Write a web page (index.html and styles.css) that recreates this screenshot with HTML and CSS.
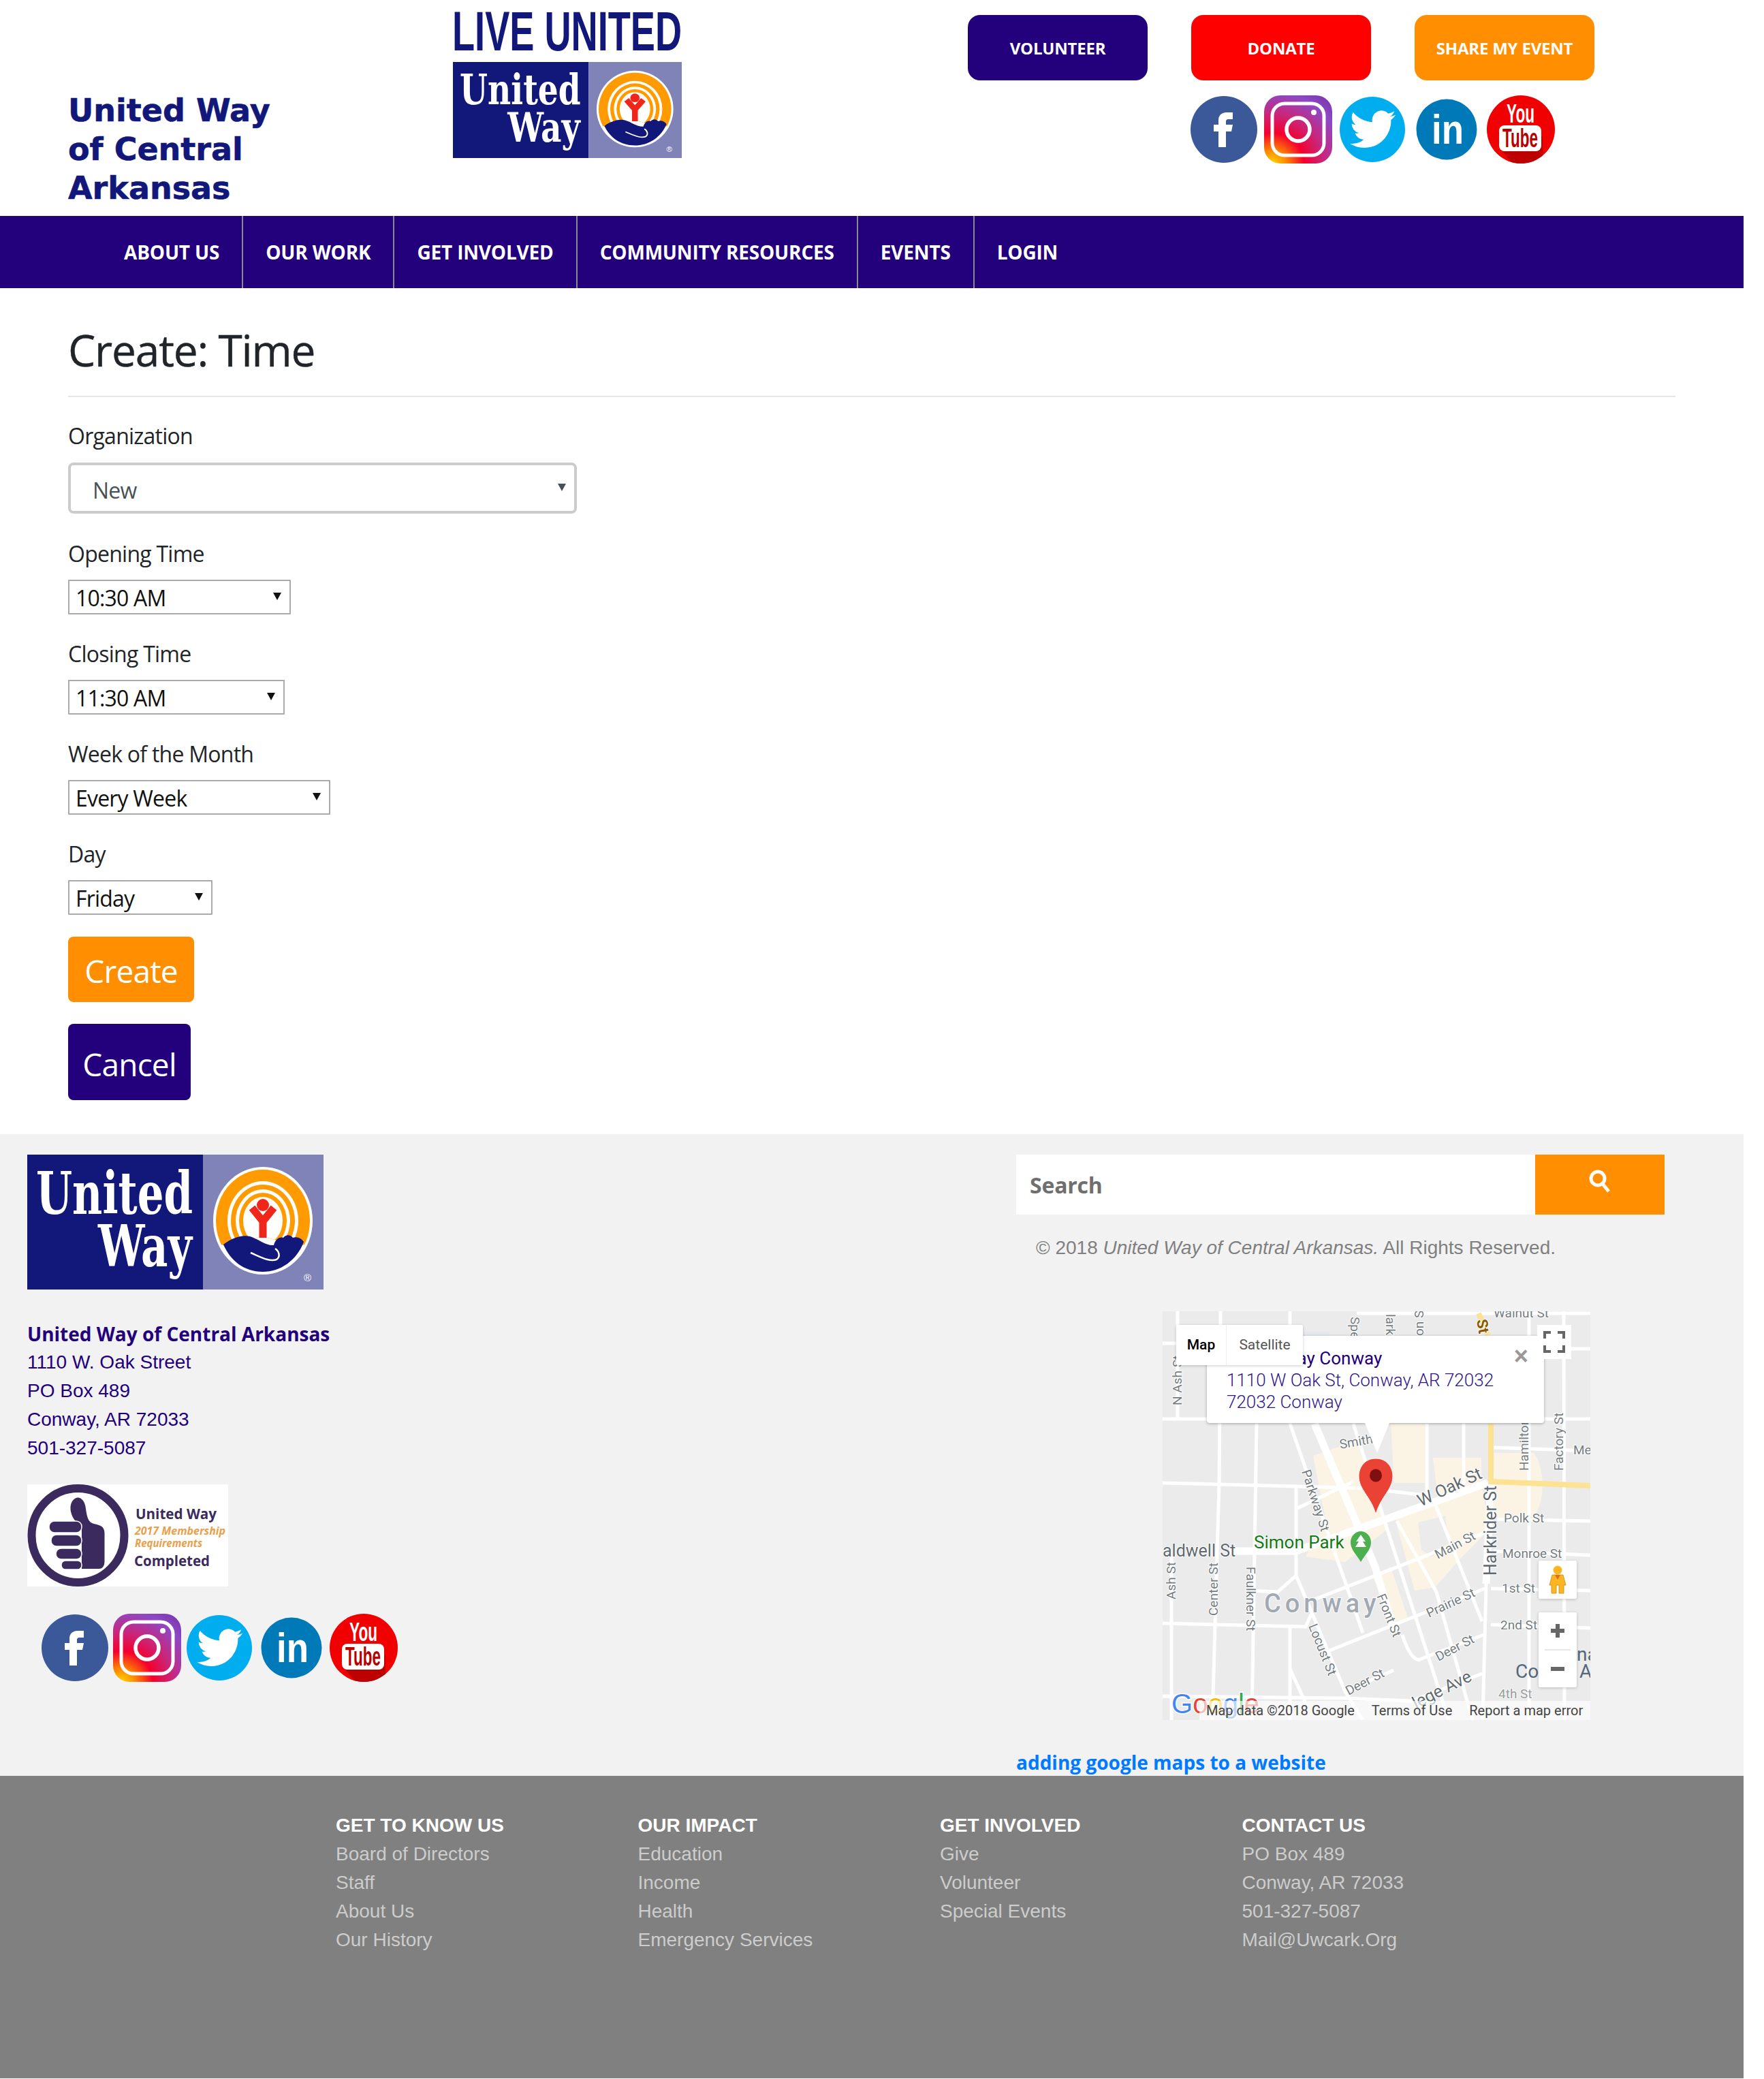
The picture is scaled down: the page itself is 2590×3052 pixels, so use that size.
FILE: index.html
```html
<!DOCTYPE html>
<html lang="en">
<head>
  <meta charset="UTF-8" />
  <meta name="viewport" content="width=device-width, initial-scale=1.0"/>
  <title>Create: Time - United Way of Central Arkansas</title>
  <link rel="stylesheet" href="styles.css">
</head>
<body>
  <!-- shared artwork -->
  <svg class="defs" width="0" height="0">
    <defs>
      <radialGradient id="igGrad" cx="0.12" cy="1.02" r="1.3">
        <stop offset="0" stop-color="#ffdd00"/>
        <stop offset="0.16" stop-color="#ff8a00"/>
        <stop offset="0.36" stop-color="#f5002c"/>
        <stop offset="0.58" stop-color="#c9267c"/>
        <stop offset="0.82" stop-color="#8c49c6"/>
        <stop offset="1" stop-color="#7a35a8"/>
      </radialGradient>
      <clipPath id="archClip"><path d="M270 0H420V130L396 134L346 120L296 134L270 130Z"/></clipPath>
      <clipPath id="ytClip"><circle cx="50" cy="50" r="50"/></clipPath>

      <symbol id="uwLogo" viewBox="0 0 435 198" preserveAspectRatio="none">
        <rect width="258" height="198" fill="#12177a"/>
        <rect x="258" width="177" height="198" fill="#7f83b8"/>
        <text class="logo-word" x="13" y="87" font-size="86" textLength="230" lengthAdjust="spacingAndGlyphs">United</text>
        <text class="logo-word" x="104" y="164" font-size="84" textLength="138" lengthAdjust="spacingAndGlyphs">Way</text>
        <ellipse cx="346" cy="97" rx="73" ry="79" fill="#fff"/>
        <g clip-path="url(#archClip)">
          <ellipse cx="346" cy="97" rx="69" ry="75" fill="#ff9b00"/>
          <ellipse cx="346" cy="97" rx="52" ry="58" fill="#fff"/>
          <ellipse cx="346" cy="97" rx="47" ry="53" fill="#ff9b00"/>
          <ellipse cx="346" cy="97" rx="40" ry="46" fill="#fff"/>
          <ellipse cx="346" cy="97" rx="35" ry="41" fill="#ff9b00"/>
          <ellipse cx="346" cy="97" rx="29" ry="35" fill="#fff"/>
        </g>
        <circle cx="346" cy="74" r="9" fill="#f0261b"/>
        <path d="M330 78L346 98L362 78M346 96V122" fill="none" stroke="#f0261b" stroke-width="11"/>
        <path d="M288 132C300 122 316 117 327 120C340 124 350 134 362 133C364 125 370 120 376 122C380 117 386 117 390 122C396 120 402 122 406 128C396 155 372 172 346 172C318 172 298 155 288 132Z" fill="#12177a"/>
        <path d="M328 144C342 150 356 158 366 154C372 150 370 142 364 138" fill="none" stroke="#fff" stroke-width="2.5"/>
        <text x="406" y="186" font-size="15" fill="#fff" font-family="'Liberation Sans', sans-serif">®</text>
      </symbol>

      <symbol id="icFb" viewBox="0 0 100 100">
        <circle cx="50" cy="50" r="49" fill="#3b5998"/>
        <path d="M42 76V53H35V43H42V36C42 30 46 25 54 25H63V35H57C54 35 53 36 53 39V43H63L61 53H53V76Z" fill="#fff"/>
      </symbol>
      <symbol id="icIg" viewBox="0 0 100 100">
        <rect width="100" height="100" rx="24" fill="url(#igGrad)"/>
        <rect x="12" y="12" width="76" height="76" rx="18" fill="none" stroke="#fff" stroke-width="5"/>
        <circle cx="50" cy="50" r="17" fill="none" stroke="#fff" stroke-width="5.5"/>
        <circle cx="73" cy="25" r="4" fill="#fff"/>
      </symbol>
      <symbol id="icTw" viewBox="0 0 100 100">
        <circle cx="50" cy="50" r="48" fill="#00adef"/>
        <path transform="translate(17 16) scale(2.8)" fill="#fff" d="M23.953 4.57a10 10 0 01-2.825.775 4.958 4.958 0 002.163-2.723c-.951.555-2.005.959-3.127 1.184a4.92 4.92 0 00-8.384 4.482C7.69 8.095 4.067 6.13 1.64 3.162a4.822 4.822 0 00-.666 2.475c0 1.71.87 3.213 2.188 4.096a4.904 4.904 0 01-2.228-.616v.06a4.923 4.923 0 003.946 4.827 4.996 4.996 0 01-2.212.085 4.936 4.936 0 004.604 3.417 9.867 9.867 0 01-6.102 2.105c-.39 0-.779-.023-1.17-.067a13.995 13.995 0 007.557 2.209c9.053 0 13.998-7.496 13.998-13.985 0-.21 0-.42-.015-.63A9.935 9.935 0 0024 4.59z"/>
      </symbol>
      <symbol id="icIn" viewBox="0 0 100 100">
        <circle cx="50" cy="50" r="44.5" fill="#0079b9"/>
        <text class="ic-word" x="28" y="71" font-size="62" textLength="47" lengthAdjust="spacingAndGlyphs" fill="#fff">in</text>
      </symbol>
      <symbol id="icYt" viewBox="0 0 100 100">
        <circle cx="50" cy="50" r="50" fill="#f00000"/>
        <path clip-path="url(#ytClip)" d="M18 76L38 100H82V60Z" fill="#bd0000"/>
        <text class="ic-word" x="29" y="40" font-size="38" textLength="41" lengthAdjust="spacingAndGlyphs" fill="#fff">You</text>
        <rect x="18" y="44" width="62" height="38" rx="8" fill="#fff"/>
        <text class="ic-word" x="23" y="76" font-size="39" textLength="52" lengthAdjust="spacingAndGlyphs" fill="#b70000">Tube</text>
      </symbol>
    </defs>
  </svg>

  <div class="site">
    <header class="top">
      <h2 class="brand">United Way<br>of Central<br>Arkansas</h2>
      <div class="live">
        <svg class="live-word" viewBox="0 0 336 91" width="336" height="91">
          <text x="-1" y="74" font-size="81" textLength="337" lengthAdjust="spacingAndGlyphs">LIVE UNITED</text>
        </svg>
        <svg class="logo-top"><use href="#uwLogo" width="336" height="141"/></svg>
      </div>
      <div class="actions">
        <div class="action-row">
          <a class="action action-navy" href="#">VOLUNTEER</a>
          <a class="action action-red" href="#">DONATE</a>
          <a class="action action-orange" href="#">SHARE MY EVENT</a>
        </div>
        <div class="social social-top">
          <svg class="ic"><use href="#icFb"/></svg>
          <svg class="ic"><use href="#icIg"/></svg>
          <svg class="ic"><use href="#icTw"/></svg>
          <svg class="ic"><use href="#icIn"/></svg>
          <svg class="ic"><use href="#icYt"/></svg>
        </div>
      </div>
    </header>

    <nav class="mainnav">
      <a href="#">ABOUT US</a>
      <a href="#">OUR WORK</a>
      <a href="#">GET INVOLVED</a>
      <a href="#">COMMUNITY RESOURCES</a>
      <a href="#">EVENTS</a>
      <a href="#">LOGIN</a>
    </nav>

    <main class="content">
      <h1 class="page-title">Create: Time</h1>
      <form class="time-form">
        <label class="lbl lbl-org">Organization</label>
        <div class="pick pick-org">
          <select class="sel sel-org"><option>New</option></select>
        </div>
        <label class="lbl">Opening Time</label>
        <div class="pick">
          <select class="sel sel-open"><option>10:30 AM</option></select>
        </div>
        <label class="lbl">Closing Time</label>
        <div class="pick">
          <select class="sel sel-close"><option>11:30 AM</option></select>
        </div>
        <label class="lbl">Week of the Month</label>
        <div class="pick">
          <select class="sel sel-week"><option>Every Week</option></select>
        </div>
        <label class="lbl">Day</label>
        <div class="pick">
          <select class="sel sel-day"><option>Friday</option></select>
        </div>
        <button class="btn btn-create" type="button">Create</button>
        <a class="btn btn-cancel" href="#">Cancel</a>
      </form>
    </main>

    <section class="mid">
      <div class="mid-left">
        <svg class="logo-foot"><use href="#uwLogo" width="435" height="198"/></svg>
        <address class="addr">
          <strong>United Way of Central Arkansas</strong>
          <span>1110 W. Oak Street</span>
          <span>PO Box 489</span>
          <span>Conway, AR 72033</span>
          <span>501-327-5087</span>
        </address>
        <svg class="badge" viewBox="0 0 295 150">
          <rect width="295" height="150" fill="#fff"/>
          <ellipse cx="74.500" cy="75" rx="68" ry="69" fill="none" stroke="#3b2a5e" stroke-width="12"/>
          <path d="M80 124H105C112 124 113.500 118 113.500 112V72C113.500 62 108 60 98 58C90 56 88 50 86 36C85 24 78 18 72 20C66 22 62 30 64 40C66 50 72 56 76 58L80 62Z" fill="#3b2a5e"/>
          <g fill="#3b2a5e" stroke="#fff" stroke-width="1.500">
            <rect x="32" y="54" width="48" height="17" rx="8"/>
            <rect x="35" y="74" width="45" height="17" rx="8"/>
            <rect x="42" y="94" width="38" height="16" rx="8"/>
            <rect x="50" y="112" width="30" height="13" rx="6"/>
          </g>
          <text class="badge-strong" x="159" y="51" font-size="21" textLength="119" lengthAdjust="spacingAndGlyphs">United Way</text>
          <text class="badge-note" x="158" y="74" font-size="16" textLength="133" lengthAdjust="spacingAndGlyphs">2017 Membership</text>
          <text class="badge-note" x="158" y="92" font-size="16" textLength="99" lengthAdjust="spacingAndGlyphs">Requirements</text>
          <text class="badge-strong" x="157" y="120" font-size="21" textLength="111" lengthAdjust="spacingAndGlyphs">Completed</text>
        </svg>
        <div class="social social-foot">
          <svg class="ic"><use href="#icFb"/></svg>
          <svg class="ic"><use href="#icIg"/></svg>
          <svg class="ic"><use href="#icTw"/></svg>
          <svg class="ic"><use href="#icIn"/></svg>
          <svg class="ic"><use href="#icYt"/></svg>
        </div>
      </div>

      <div class="mid-right">
        <form class="search">
          <input class="search-input" type="text" placeholder="Search">
          <button class="search-btn" type="button" aria-label="Search">
            <svg width="32" height="34" viewBox="0 0 32 34"><circle cx="13" cy="13" r="10" fill="none" stroke="#fff" stroke-width="5"/><path d="M20 21L29 32" stroke="#fff" stroke-width="5"/></svg>
          </button>
        </form>
        <p class="copy">© 2018 <em>United Way of Central Arkansas.</em> All Rights Reserved.</p>

        <div class="map">
          <svg class="map-art" viewBox="0 0 628 600" width="628" height="600">
            <rect width="628" height="600" fill="#ebebeb"/>
            <path d="M195 30H245V60H195Z" fill="#e4e8ec"/>
            <g fill="#fbf4e4">
              <path d="M221 212L285 190L330 320L268 368L210 360L240 310Z"/>
              <path d="M335 165H385V252H340Z"/>
              <path d="M397 215L468 215V262L405 280Z"/>
              <path d="M486 208H545C562 230 562 280 545 302H486Z"/>
              <path d="M340 300L400 280L470 262L480 320L440 360L400 405L370 410Z"/>
              <path d="M308 388L335 375L360 450L340 468Z"/>
            </g>
            <path d="M375 310L415 300L420 340L395 360L380 350Z" fill="#ebebeb"/>

            <g class="roads">
              <path d="M85 0L83 252L73 600"/>
              <path d="M138 165L131 600"/>
              <path d="M196 257V388"/>
              <path d="M13 360V600"/>
              <path d="M22 0V158"/>
              <path d="M187 0V165"/>
              <path d="M388 165V285"/>
              <path d="M442 165V262"/>
              <path d="M538 0V600"/>
              <path d="M589 0L590 600"/>
              <path d="M187 165L294 472"/>
              <path d="M280 165L420 600"/>
              <path d="M0 252L196 257L300 260L385 270"/>
              <path d="M0 158H628"/>
              <path d="M0 47H60"/>
              <path d="M285 3H628"/>
              <path d="M560 55H628"/>
              <path d="M486 200L628 205"/>
              <path d="M491 305L628 308"/>
              <path d="M486 352L628 358"/>
              <path d="M482 407L628 410"/>
              <path d="M482 460L628 465"/>
              <path d="M0 458L210 463L218 445"/>
              <path d="M129 410L169 412L196 388L268 558L294 600"/>
              <path d="M187 465V600"/>
              <path d="M187 525L210 575"/>
              <path d="M218 425L473 325"/>
              <path d="M245 498L473 407"/>
              <path d="M375 512L471 475"/>
              <path d="M268 558L339 527"/>
              <path d="M0 565L268 568L366 572L469 532"/>
              <path d="M344 308L402 412L455 600"/>
              <path d="M397 275L469 455"/>
              <path d="M352 475C360 500 368 512 378 512"/>
              <path d="M196 290L280 250"/>
              <path d="M475 400L470 600" />
            </g>
            <g class="roads roads-wide">
              <path d="M223 165L312 375L340 470"/>
              <path d="M98 352H196L477 252"/>
              <path d="M482 250L475 400"/>
            </g>
            <path d="M482 165V250L628 256" class="hwy"/>
            <path d="M464 3L478 35" class="hwy"/>

            <g class="ml">
              <text x="486" y="9">Walnut St</text>
              <text transform="translate(276 8) rotate(90)">Spe</text>
              <text transform="translate(328 4) rotate(90)">lark</text>
              <text transform="translate(383 36) rotate(-90)">on S</text>
              <text class="ml-st" transform="translate(461 13) rotate(80)">St</text>
              <text transform="translate(28 138) rotate(-90)">N Ash St</text>
              <text transform="translate(261 202) rotate(-10)">Smith</text>
              <text transform="translate(204 235) rotate(72)">Parkway St</text>
              <text x="501" y="310">Polk St</text>
              <text x="499" y="362">Monroe St</text>
              <text transform="translate(404 364) rotate(-28)">Main St</text>
              <text transform="translate(19 423) rotate(-90)">Ash St</text>
              <text transform="translate(81 447) rotate(-90)">Center St</text>
              <text transform="translate(123 375) rotate(90)">Faulkner St</text>
              <text transform="translate(314 418) rotate(68)">Front St</text>
              <text transform="translate(214 462) rotate(68)">Locust St</text>
              <text transform="translate(391 450) rotate(-25)">Prairie St</text>
              <text x="498" y="413">1st St</text>
              <text x="496" y="467">2nd St</text>
              <text transform="translate(405 514) rotate(-28)">Deer St</text>
              <text transform="translate(273 564) rotate(-28)">Deer St</text>
              <text transform="translate(588 234) rotate(-90)">Factory St</text>
              <text transform="translate(537 234) rotate(-90)">Hamilton St</text>
              <text x="603" y="210">Me</text>
              <text x="493" y="568" opacity="0.7">4th St</text>
            </g>
            <g class="ml ml-big">
              <text transform="translate(379 287) rotate(-25)">W Oak St</text>
              <text transform="translate(490 388) rotate(-90)">Harkrider St</text>
              <text x="0" y="360">aldwell St</text>
              <text transform="translate(372 584) rotate(-27)">lege Ave</text>
            </g>
            <text class="ml-town" x="149" y="442">Conway</text>
            <text class="ml-park" x="134" y="348">Simon Park</text>
            <path d="M291 368C284 356 276 350 276 339C276 330 283 323 291 323C299 323 306 330 306 339C306 350 298 356 291 368Z" fill="#4caf50"/>
            <path d="M291 328L284 338H288L283 346H299L294 338H298Z" fill="#fff"/>
            <text class="ml-co" x="518" y="538">Co</text>
            <text class="ml-co" x="608" y="513">na</text>
            <text class="ml-co" x="612" y="538">A</text>

            <path d="M313 216C296 216 288 230 288 242C288 262 306 272 313 298C320 272 338 262 338 242C338 230 330 216 313 216Z" fill="#ea4335" stroke="#fff" stroke-width="1"/>
            <ellipse cx="313" cy="241" rx="9" ry="9.500" fill="#7f1010"/>
            <text class="gl" x="13" y="590"><tspan fill="#4285f4">G</tspan><tspan fill="#ea4335">o</tspan><tspan fill="#fbbc05">o</tspan><tspan fill="#4285f4">g</tspan><tspan fill="#34a853">l</tspan><tspan fill="#ea4335">e</tspan></text>
          </svg>

          <div class="info">
            <b class="info-title">United Way Conway</b>
            <span>1110 W Oak St, Conway, AR 72032</span>
            <span>72032 Conway</span>
            <i class="info-close">×</i>
          </div>
          <i class="info-tail"></i>
          <div class="map-types"><b>Map</b><span>Satellite</span></div>
          <div class="map-full">
            <svg width="32" height="32" viewBox="0 0 32 32"><path d="M2 11V2H11M21 2H30V11M30 21V30H21M11 30H2V21" fill="none" stroke="#666" stroke-width="4"/></svg>
          </div>
          <div class="map-peg">
            <svg width="26" height="42" viewBox="0 0 26 42"><circle cx="13" cy="7" r="6.500" fill="#fdb622"/><path d="M5 14H21L25 29H22V41H15V29H11V41H4V29H1Z" fill="#fdb622" stroke="#c88a10" stroke-width="0.800"/><path d="M9 14L13 21L17 14Z" fill="#d9701a"/></svg>
          </div>
          <div class="map-zoom">
            <span class="zm zm-plus"></span>
            <span class="zm-sep"></span>
            <span class="zm zm-minus"></span>
          </div>
          <div class="map-attr">
            <span>Map data ©2018 Google</span>
            <span>Terms of Use</span>
            <span>Report a map error</span>
          </div>
        </div>

        <a class="map-link" href="#">adding google maps to a website</a>
      </div>
    </section>

    <footer class="links">
      <ul>
        <li class="head">GET TO KNOW US</li>
        <li>Board of Directors</li>
        <li>Staff</li>
        <li>About Us</li>
        <li>Our History</li>
      </ul>
      <ul>
        <li class="head">OUR IMPACT</li>
        <li>Education</li>
        <li>Income</li>
        <li>Health</li>
        <li>Emergency Services</li>
      </ul>
      <ul>
        <li class="head">GET INVOLVED</li>
        <li>Give</li>
        <li>Volunteer</li>
        <li>Special Events</li>
      </ul>
      <ul>
        <li class="head">CONTACT US</li>
        <li>PO Box 489</li>
        <li>Conway, AR 72033</li>
        <li>501-327-5087</li>
        <li>Mail@Uwcark.Org</li>
      </ul>
    </footer>
  </div>
</body>
</html>
```

FILE: styles.css
```css
* {
  box-sizing: border-box;
}
body {
  margin: 0;
  background: #fff;
  font-family: "Open Sans", sans-serif;
  color: #212529;
}
a {
  text-decoration: none;
}
.defs {
  position: absolute;
}
.site {
  width: 2560px;
}

/* top */
.top {
  display: flex;
  height: 317px;
  padding-left: 100px;
}
.brand {
  width: 565px;
  align-self: flex-end;
  margin: 0 0 12px;
  font-family: "DejaVu Sans", sans-serif;
  font-size: 46px;
  font-weight: bold;
  line-height: 57px;
  color: #12177a;
  -webkit-text-stroke: 0.6px #12177a;
}
.live {
  width: 336px;
}
.live-word {
  display: block;
}
.live-word text {
  font-family: "Liberation Sans", sans-serif;
  font-weight: bold;
  fill: #12177a;
}
.logo-top {
  display: block;
  width: 336px;
  height: 141px;
}
.logo-word {
  font-family: "DejaVu Serif", serif;
  font-weight: bold;
  fill: #fff;
}
.ic-word {
  font-family: "Liberation Sans", sans-serif;
  font-weight: bold;
}
.actions {
  margin-left: 420px;
  padding-top: 22px;
}
.action-row {
  display: flex;
  gap: 64px;
}
.action {
  display: flex;
  align-items: center;
  justify-content: center;
  width: 264px;
  height: 96px;
  border-radius: 18px;
  color: #fff;
  font-size: 24px;
  font-weight: 700;
  letter-spacing: -0.2px;
}
.action-navy {
  background: #23007c;
}
.action-red {
  background: #ff0000;
}
.action-orange {
  background: #ff8f00;
}
.social {
  display: flex;
}
.ic {
  display: block;
  width: 100px;
  height: 100px;
}
.social-top {
  margin: 22px 0 0 326px;
  gap: 9px;
}
.social-foot {
  margin: 40px 0 0 20px;
  gap: 6px;
}

/* nav */
.mainnav {
  display: flex;
  height: 106px;
  padding-left: 149px;
  background: #23007c;
}
.mainnav a {
  display: flex;
  align-items: center;
  padding: 0 33px;
  border-right: 2px solid #8a8a8a;
  color: #fff;
  font-size: 28px;
  font-weight: 700;
  letter-spacing: -0.18px;
}
.mainnav a:last-child {
  border-right: none;
}

/* form */
.content {
  height: 1242px;
  margin: 0 100px;
}
.page-title {
  margin: 0;
  padding-top: 47px;
  height: 160px;
  border-bottom: 2px solid #e6e6e6;
  font-size: 64px;
  font-weight: 400;
  line-height: 88px;
  letter-spacing: -1.2px;
  -webkit-text-stroke: 0.4px #212529;
}
.time-form {
  display: block;
}
.lbl {
  display: block;
  height: 44px;
  margin-top: 36px;
  font-size: 32px;
  line-height: 44px;
  letter-spacing: -0.75px;
}
.lbl-org {
  margin-top: 35px;
}
.pick {
  position: relative;
  width: max-content;
  margin-top: 16px;
}
.pick::after {
  content: "";
  position: absolute;
  top: 19px;
  right: 14px;
  border-left: 6px solid transparent;
  border-right: 6px solid transparent;
  border-top: 11px solid #111;
  pointer-events: none;
}
.pick-org {
  margin: 17px 0 37px;
}
.pick-org + .lbl {
  margin-top: 0;
}
.pick-org::after {
  top: 31px;
  right: 16px;
  border-top-color: #495057;
}
.sel {
  display: block;
  appearance: none;
  height: 51px;
  padding: 2px 0 0 9px;
  border: 2px solid #aaa;
  border-radius: 1px;
  background: #fff;
  color: #111;
  font-family: "Open Sans", sans-serif;
  font-size: 32px;
  letter-spacing: -0.8px;
}
.sel-org {
  width: 747px;
  height: 75px;
  padding: 5px 0 0 32px;
  border: 4px solid #ccc;
  border-radius: 8px;
  color: #495057;
}
.sel-open {
  width: 327px;
}
.sel-close {
  width: 318px;
}
.sel-week {
  width: 385px;
}
.sel-day {
  width: 212px;
}
.btn {
  display: block;
  border: none;
  border-radius: 8px;
  color: #fff;
  font-family: "Open Sans", sans-serif;
  font-size: 46px;
  letter-spacing: -0.8px;
  text-align: center;
}
.btn-create {
  width: 185px;
  height: 96px;
  margin-top: 32px;
  padding: 4px 0 0;
  background: #ff8f00;
}
.btn-cancel {
  width: 180px;
  height: 112px;
  margin-top: 32px;
  line-height: 118px;
  background: #23007c;
}

/* middle footer */
.mid {
  display: flex;
  height: 942px;
  padding: 30px 0 0 40px;
  background: #f2f2f2;
}
.mid-left {
  width: 1452px;
}
.logo-foot {
  display: block;
  width: 435px;
  height: 198px;
}
.addr {
  display: flex;
  flex-direction: column;
  margin: 45px 0 32px;
  color: #23007c;
  font-family: "Liberation Sans", sans-serif;
  font-size: 28px;
  font-style: normal;
  line-height: 42px;
}
.addr strong {
  font-family: "Open Sans", sans-serif;
  font-weight: 700;
  font-size: 28px;
  line-height: 41px;
}
.badge {
  display: block;
  width: 295px;
  height: 150px;
}
.badge-strong {
  font-family: "Open Sans", sans-serif;
  font-weight: 700;
  fill: #3b2a5e;
}
.badge-note {
  font-family: "Open Sans", sans-serif;
  font-weight: 700;
  font-style: italic;
  fill: #e8a04a;
}
.mid-right {
  width: 952px;
}
.search {
  display: flex;
  width: 952px;
  height: 88px;
}
.search-input {
  width: 762px;
  padding: 0 20px;
  border: none;
  background: #fff;
  font-family: "Open Sans", sans-serif;
  font-size: 32px;
  font-weight: 700;
  letter-spacing: -0.2px;
}
.search-input::placeholder {
  color: #6f6f6f;
  opacity: 1;
}
.search-btn {
  display: flex;
  justify-content: center;
  width: 190px;
  padding: 22px 0 0;
  border: none;
  background: #ff8f00;
}
.copy {
  margin: 28px 0 0 29px;
  color: #808080;
  font-family: "Liberation Sans", sans-serif;
  font-size: 28px;
  line-height: 42px;
}
.map {
  position: relative;
  width: 628px;
  height: 600px;
  margin: 72px 0 0 215px;
  overflow: hidden;
}
.map-art {
  display: block;
}
.roads path {
  fill: none;
  stroke: #fff;
  stroke-width: 5;
}
.roads-wide path {
  stroke-width: 11;
}
.hwy {
  fill: none;
  stroke: #fde293;
  stroke-width: 8;
}
.ml text {
  font-family: Roboto, sans-serif;
  font-size: 19px;
  fill: #757c80;
  stroke: #fff;
  stroke-width: 2px;
  paint-order: stroke;
}
.ml-big text {
  font-size: 25px;
  fill: #5f6a70;
}
.ml .ml-st {
  font-weight: 700;
  font-size: 22px;
  fill: #8a5a00;
}
.ml-town {
  font-family: Roboto, sans-serif;
  font-size: 38px;
  font-weight: 500;
  letter-spacing: 6px;
  fill: #a3a9b3;
  stroke: #fff;
  stroke-width: 2px;
  paint-order: stroke;
}
.ml-park {
  font-family: Roboto, sans-serif;
  font-size: 26px;
  fill: #137a13;
  stroke: #fff;
  stroke-width: 2px;
  paint-order: stroke;
}
.ml-co {
  font-family: Roboto, sans-serif;
  font-size: 28px;
  fill: #53687a;
}
.gl {
  font-family: "Liberation Sans", sans-serif;
  font-size: 40px;
  stroke: #fff;
  stroke-width: 3px;
  paint-order: stroke;
}
.info {
  position: absolute;
  left: 65px;
  top: 36px;
  display: flex;
  flex-direction: column;
  width: 495px;
  height: 128px;
  padding: 17px 0 0 29px;
  border-radius: 4px;
  background: #fff;
  box-shadow: 0 1px 4px rgba(0, 0, 0, 0.3);
  color: #30158c;
  font-family: Roboto, sans-serif;
  font-size: 26px;
  font-weight: 300;
  line-height: 32px;
}
.info-title {
  color: #23007c;
  font-weight: 400;
  font-size: 26px;
}
.info-close {
  position: absolute;
  top: 12px;
  right: 23px;
  color: #999;
  font-size: 40px;
  font-style: normal;
  font-weight: 500;
  line-height: 36px;
}
.info-tail {
  position: absolute;
  left: 297px;
  top: 164px;
  border-left: 18px solid transparent;
  border-right: 18px solid transparent;
  border-top: 44px solid #fff;
}
.map-types {
  position: absolute;
  left: 20px;
  top: 20px;
  display: flex;
  width: 186px;
  height: 59px;
  border-radius: 2px;
  background: #fff;
  box-shadow: 0 1px 4px rgba(0, 0, 0, 0.2);
  font-family: Roboto, sans-serif;
  font-size: 21px;
  line-height: 59px;
}
.map-types b {
  width: 74px;
  border-right: 1px solid #eee;
  color: #000;
  font-weight: 500;
  text-align: center;
}
.map-types span {
  flex: 1;
  color: #565656;
  text-align: center;
}
.map-full {
  position: absolute;
  left: 550px;
  top: 20px;
  display: flex;
  align-items: center;
  justify-content: center;
  width: 50px;
  height: 50px;
  background: #fff;
}
.map-peg {
  position: absolute;
  left: 552px;
  top: 366px;
  display: flex;
  align-items: center;
  justify-content: center;
  width: 56px;
  height: 56px;
  border-radius: 2px;
  background: #fff;
  box-shadow: 0 1px 4px rgba(0, 0, 0, 0.2);
}
.map-zoom {
  position: absolute;
  left: 552px;
  top: 442px;
  width: 56px;
  height: 110px;
  border-radius: 2px;
  background: #fff;
  box-shadow: 0 1px 4px rgba(0, 0, 0, 0.2);
}
.zm {
  position: absolute;
  left: 18px;
  width: 20px;
  height: 6px;
  background: #666;
}
.zm-plus {
  top: 24px;
}
.zm-plus::after {
  content: "";
  position: absolute;
  left: 7px;
  top: -7px;
  width: 6px;
  height: 20px;
  background: #666;
}
.zm-minus {
  top: 80px;
}
.zm-sep {
  position: absolute;
  left: 9px;
  right: 9px;
  top: 54px;
  height: 2px;
  background: #e6e6e6;
}
.map-attr {
  position: absolute;
  left: 54px;
  right: 0;
  bottom: 0;
  display: flex;
  gap: 25px;
  height: 28px;
  padding-left: 10px;
  background: rgba(255, 255, 255, 0.65);
  color: #444;
  font-family: Roboto, sans-serif;
  font-size: 20px;
  line-height: 28px;
}
.map-link {
  display: block;
  margin-top: 40px;
  color: #007bff;
  font-size: 28px;
  font-weight: 700;
  line-height: 44px;
}

/* bottom links */
.links {
  display: grid;
  grid-template-columns: repeat(4, 443.5px);
  height: 444px;
  padding: 52px 0 0 493px;
  background: #808080;
  font-family: "Liberation Sans", sans-serif;
  font-size: 28px;
  line-height: 42px;
  color: #ccc;
}
.links ul {
  margin: 0;
  padding: 0;
  list-style: none;
}
.links .head {
  color: #fff;
  font-weight: bold;
}
```
